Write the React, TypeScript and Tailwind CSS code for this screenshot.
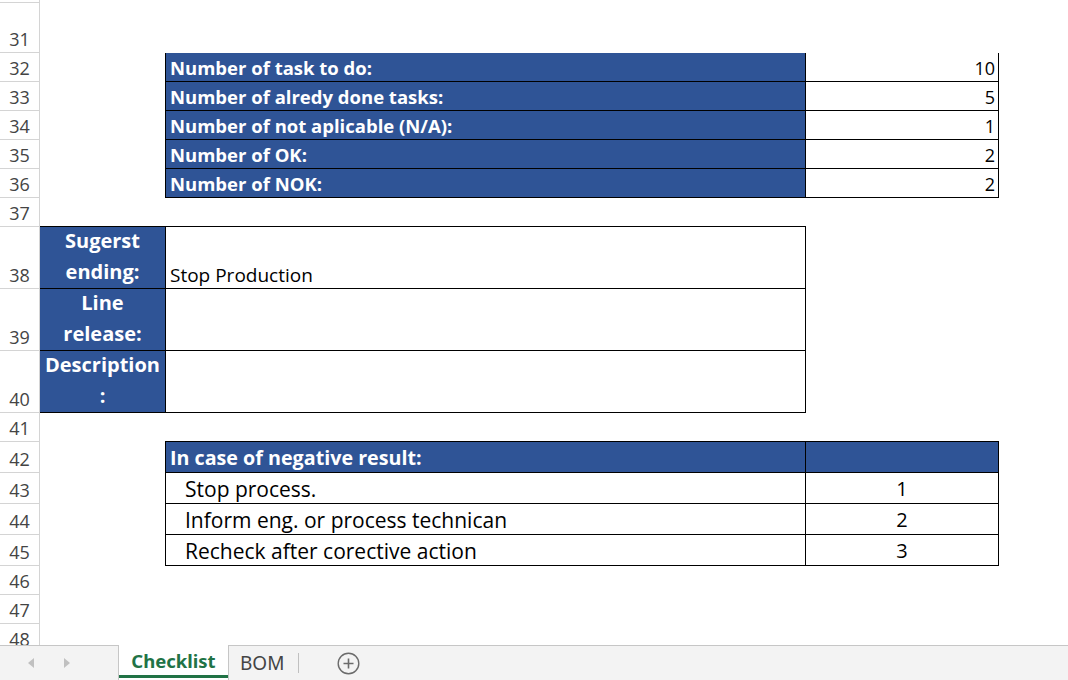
const blue = "bg-[#2f5496]";

const RowHead = ({ n }: { n?: number }) => (
  <div className="w-[40px] shrink-0 border-r border-b border-[#d4d4d4] flex items-end justify-center pb-[2px] text-[#444] text-[18px] leading-[22px]">
    {n}
  </div>
);

const stats = [
  { n: 32, label: "Number of task to do:", value: 10 },
  { n: 33, label: "Number of alredy done tasks:", value: 5 },
  { n: 34, label: "Number of not aplicable (N/A):", value: 1 },
  { n: 35, label: "Number of OK:", value: 2 },
  { n: 36, label: "Number of NOK:", value: 2 },
];

const ending = [
  { n: 38, lines: ["Sugerst", "ending:"], value: "Stop Production" },
  { n: 39, lines: ["Line", "release:"], value: "" },
  { n: 40, lines: ["Description", ":"], value: "" },
];

const actions = [
  { n: 43, text: "Stop process.", value: 1 },
  { n: 44, text: "Inform eng. or process technican", value: 2 },
  { n: 45, text: "Recheck after corective action", value: 3 },
];

export default function App() {
  return (
    <div
      className="w-[1068px] h-[680px] bg-white overflow-hidden flex flex-col text-black"
      style={{ fontFamily: "'Open Sans', 'Noto Sans', sans-serif" }}
    >
      {/* sheet */}
      <div className="h-[645px] overflow-hidden">
        <div className="flex h-[3px]">
          <RowHead />
        </div>
        <div className="flex h-[50px]">
          <RowHead n={31} />
        </div>

        {/* summary counts */}
        {stats.map((s) => (
          <div key={s.n} className="flex h-[29px]">
            <RowHead n={s.n} />
            <div className="w-[125px] shrink-0" />
            <div
              className={`w-[640px] shrink-0 ${blue} border-l border-b border-black flex items-end pl-[4px] pb-[2px] text-white font-bold text-[18.5px] leading-[22px]`}
            >
              {s.label}
            </div>
            <div className="w-[194px] shrink-0 border-l border-r border-b border-black flex items-end justify-end pr-[3px] pb-[2px] text-[18px] leading-[22px]">
              {s.value}
            </div>
          </div>
        ))}

        <div className="flex h-[29px]">
          <RowHead n={37} />
          <div className="w-[125px] shrink-0 border-b border-black" />
          <div className="w-[641px] shrink-0 border-b border-black" />
        </div>

        {/* ending block */}
        {ending.map((e) => (
          <div key={e.n} className="flex h-[62px]">
            <RowHead n={e.n} />
            <div
              className={`w-[125px] shrink-0 ${blue} border-b border-black flex flex-col items-center justify-end pb-[1px] text-white font-bold text-[20px] leading-[31px]`}
            >
              {e.lines.map((l) => (
                <span key={l}>{l}</span>
              ))}
            </div>
            <div className="w-[641px] shrink-0 border-l border-r border-b border-black flex items-end pl-[4px] pb-[2px] text-[19px] leading-[22px]">
              {e.value}
            </div>
          </div>
        ))}

        <div className="flex h-[29px]">
          <RowHead n={41} />
          <div className="w-[125px] shrink-0" />
          <div className="w-[834px] shrink-0 border-b border-black" />
        </div>

        {/* negative result table */}
        <div className="flex h-[31px]">
          <RowHead n={42} />
          <div className="w-[125px] shrink-0" />
          <div
            className={`w-[640px] shrink-0 ${blue} border-l border-b border-black flex items-end pl-[4px] pb-[1px] text-white font-bold text-[19.7px] leading-[26px]`}
          >
            In case of negative result:
          </div>
          <div className={`w-[194px] shrink-0 ${blue} border-l border-r border-b border-black`} />
        </div>
        {actions.map((a) => (
          <div key={a.n} className="flex h-[31px]">
            <RowHead n={a.n} />
            <div className="w-[125px] shrink-0" />
            <div className="w-[640px] shrink-0 border-l border-b border-black flex items-end pl-[19px] pb-[1px] text-[21px] leading-[26px]">
              {a.text}
            </div>
            <div className="w-[194px] shrink-0 border-l border-r border-b border-black flex items-end justify-center pb-[1px] text-[20px] leading-[26px]">
              {a.value}
            </div>
          </div>
        ))}

        <div className="flex h-[29px]">
          <RowHead n={46} />
        </div>
        <div className="flex h-[29px]">
          <RowHead n={47} />
        </div>
        <div className="flex h-[29px]">
          <RowHead n={48} />
        </div>
      </div>

      {/* sheet tabs */}
      <div
        className="h-[35px] flex bg-[#f3f3f3]"
        style={{ fontFamily: "'Noto Sans', 'Open Sans', sans-serif" }}
      >
        <div className="w-[118px] shrink-0 border-t border-[#c6c6c6] flex items-center">
          <svg width="8" height="10" viewBox="0 0 8 10" className="ml-[28px]">
            <path d="M6 0 L0 5 L6 10 Z" fill="#c0c0c0" />
          </svg>
          <svg width="8" height="10" viewBox="0 0 8 10" className="ml-[27px]">
            <path d="M1 0 L7 5 L1 10 Z" fill="#c0c0c0" />
          </svg>
        </div>
        <div className="w-[111px] shrink-0 bg-white border-l border-r border-[#c6c6c6] flex flex-col">
          <div className="flex-1 flex items-center justify-center pt-[1px] text-[#217346] font-bold text-[18.5px]">
            Checklist
          </div>
          <div className="h-[3px] bg-[#217346] mb-[2px]" />
        </div>
        <div className="flex-1 border-t border-[#c6c6c6] flex items-center">
          <span className="ml-[11px] text-[#444] text-[19px]">BOM</span>
          <div className="ml-[14px] w-px h-[20px] bg-[#c0c0c0]" />
          <svg width="23" height="23" viewBox="0 0 23 23" className="ml-[38px]">
            <circle cx="11.5" cy="11.5" r="10.3" fill="none" stroke="#6b6b6b" strokeWidth="1.4" />
            <path d="M11.5 6.5 V16.5 M6.5 11.5 H16.5" stroke="#6b6b6b" strokeWidth="1.6" />
          </svg>
        </div>
      </div>
    </div>
  );
}
